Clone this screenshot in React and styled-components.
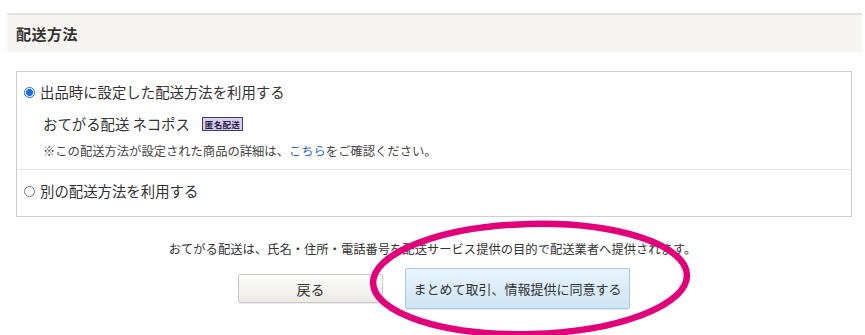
import React from "react";
import styled, { createGlobalStyle } from "styled-components";

const Global = createGlobalStyle`
  html, body { margin: 0; padding: 0; background: #fff; }
  body { font-family: "Noto Sans CJK JP", "Noto Sans", sans-serif; color: #333; }
`;

const Page = styled.div`
  position: relative;
  width: 865px;
  height: 335px;
  overflow: hidden;
  padding-top: 13px;
  box-sizing: border-box;
`;

const SectionHeader = styled.div`
  margin: 0 3px 0 7px;
  height: 39px;
  border-top: 2px solid #e2e1dc;
  background: #f6f5f1;
  box-sizing: border-box;
  display: flex;
  align-items: center;
  padding-left: 9px;
  font-size: 15px;
  font-weight: bold;
  color: #333;
  letter-spacing: 0.5px;
`;

const OptionBox = styled.div`
  margin: 19px 13px 0 16px;
  border: 1px solid #cfcfcf;
  box-sizing: border-box;
`;

const OptionRow = styled.div`
  display: flex;
  flex-direction: column;
  padding: ${(p) => p.$pad};
  border-top: ${(p) => (p.$divided ? "1px solid #e6e6e6" : "none")};
`;

const RadioLine = styled.label`
  display: flex;
  align-items: center;
  gap: 5px;
  font-size: 14.4px;
  line-height: 20px;
  color: #333;
  padding-left: 7px;
`;

const Radio = styled.span`
  width: 11px;
  height: 11px;
  border-radius: 50%;
  box-sizing: border-box;
  border: 1px solid ${(p) => (p.$checked ? "#1a6fe0" : "#777")};
  background: ${(p) =>
    p.$checked ? "radial-gradient(circle, #1a6fe0 0 3.2px, #fff 3.8px)" : "#fff"};
  flex: none;
`;

const MethodLine = styled.div`
  display: flex;
  align-items: center;
  gap: 12px;
  margin: 12px 0 0 26px;
  font-size: 14.4px;
  line-height: 20px;
`;

const Badge = styled.span`
  display: inline-flex;
  align-items: center;
  justify-content: center;
  height: 12px;
  padding: 0 2px;
  border: 1px solid #3e3e5c;
  background: #d9cdf1;
  color: #1f1f3a;
  font-size: 8.5px;
  font-weight: bold;
  line-height: 1;
  letter-spacing: 0.3px;
`;

const Note = styled.div`
  margin: 8px 0 0 26px;
  font-size: 12.3px;
  line-height: 18px;
  color: #444;
`;

const Link = styled.a`
  color: #2a67c4;
  text-decoration: none;
`;

const Notice = styled.p`
  margin: 22px 0 0;
  text-align: center;
  font-size: 12.3px;
  line-height: 20px;
  color: #333;
`;

const Actions = styled.div`
  display: flex;
  justify-content: center;
  align-items: center;
  gap: 22px;
  margin-top: 9px;
  padding-left: 3px;
`;

const Button = styled.button`
  font-family: inherit;
  box-sizing: border-box;
  width: ${(p) => p.$w}px;
  height: ${(p) => p.$h}px;
  font-size: ${(p) => p.$fs}px;
  color: #333;
  border-radius: 2px;
  cursor: pointer;
  border: 1px solid ${(p) => (p.$primary ? "#a9cbe2" : "#c8c8c8")};
  background: ${(p) =>
    p.$primary
      ? "linear-gradient(#e7f3fb, #cfe6f4)"
      : "linear-gradient(#fdfdfc, #ecebe6)"};
  box-shadow: 0 1px 1px rgba(0, 0, 0, 0.08);
`;

const Circle = styled.svg`
  position: absolute;
  left: 366px;
  top: 218px;
  pointer-events: none;
`;

export default function App() {
  return (
    <>
      <Global />
      <Page>
        <SectionHeader>配送方法</SectionHeader>
        <OptionBox>
          <OptionRow $pad="10px 0 9px">
            <RadioLine>
              <Radio $checked />
              出品時に設定した配送方法を利用する
            </RadioLine>
            <MethodLine>
              おてがる配送 ネコポス
              <Badge>匿名配送</Badge>
            </MethodLine>
            <Note>
              ※この配送方法が設定された商品の詳細は、<Link href="#">こちら</Link>をご確認ください。
            </Note>
          </OptionRow>
          <OptionRow $divided $pad="11px 0 15px">
            <RadioLine>
              <Radio />
              別の配送方法を利用する
            </RadioLine>
          </OptionRow>
        </OptionBox>
        <Notice>
          おてがる配送は、氏名・住所・電話番号を配送サービス提供の目的で配送業者へ提供されます。
        </Notice>
        <Actions>
          <Button $w={145} $h={29} $fs={14}>戻る</Button>
          <Button $primary $w={225} $h={41} $fs={13}>まとめて取引、情報提供に同意する</Button>
        </Actions>
        <Circle width="340" height="125" viewBox="0 0 340 125">
          <ellipse
            cx="164"
            cy="61"
            rx="157"
            ry="55"
            fill="none"
            stroke="#e2007a"
            strokeWidth="6.5"
            transform="rotate(-1.5 164 61)"
          />
        </Circle>
      </Page>
    </>
  );
}
